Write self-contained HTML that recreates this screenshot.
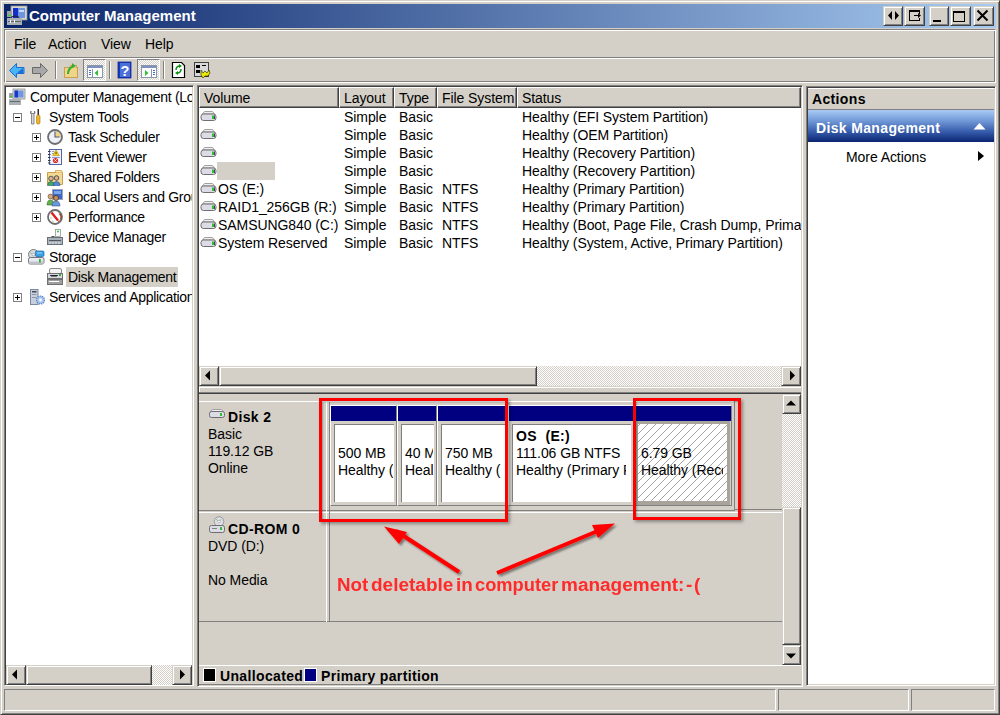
<!DOCTYPE html>
<html><head><meta charset="utf-8">
<style>
*{box-sizing:border-box;margin:0;padding:0}
html,body{width:1000px;height:715px;overflow:hidden;background:#d4d0c8}
body{position:relative;font-family:"Liberation Sans",sans-serif;font-size:14px;letter-spacing:-0.07px;color:#000}
.a{position:absolute}
.t{position:absolute;white-space:nowrap;line-height:20px}
.sunk{border:1px solid;border-color:#808080 #fff #fff #808080;box-shadow:inset 1px 1px #404040,inset -1px -1px #d4d0c8}
.rais{border:1px solid;border-color:#d4d0c8 #404040 #404040 #d4d0c8;box-shadow:inset 1px 1px #fff,inset -1px -1px #808080}
.etch{border:1px solid;border-color:#808080 #fff #fff #808080;box-shadow:inset 1px 1px #fff,inset -1px -1px #808080}
.thin{border:1px solid;border-color:#808080 #fff #fff #808080}
.chk{background-color:#fff;background-image:linear-gradient(45deg,#d4d0c8 25%,transparent 25%,transparent 75%,#d4d0c8 75%),linear-gradient(45deg,#d4d0c8 25%,transparent 25%,transparent 75%,#d4d0c8 75%);background-size:2px 2px;background-position:0 0,1px 1px}
.b{font-weight:bold;letter-spacing:0.35px}
</style></head><body>
<!-- window frame -->
<div class="a" style="left:0;top:0;width:1000px;height:715px;border:1px solid;border-color:#d4d0c8 #404040 #404040 #d4d0c8;box-shadow:inset 1px 1px #fff,inset -1px -1px #808080"></div>
<!-- title bar -->
<div class="a" style="left:4px;top:4px;width:992px;height:24px;background:linear-gradient(to right,#0a246a,#a6caf0)"></div>
<svg class="a" style="left:0;top:0" width="30" height="30" viewBox="0 0 30 30">
<rect x="11" y="6" width="16" height="14" fill="#d8d8d0" stroke="#909090" stroke-width="0.8"/>
<rect x="13" y="8" width="12" height="10" fill="#6f95e0"/>
<rect x="13" y="8" width="5" height="10" fill="#1530c8"/>
<rect x="19" y="10" width="5" height="2" fill="#c8daf8"/>
<rect x="7" y="11" width="5" height="6" fill="#9aa0a0"/>
<rect x="8" y="15" width="3" height="1" fill="#30d030"/>
<path d="M11 17.5q4-3 8 0" stroke="#202020" stroke-width="1.2" fill="none"/>
<rect x="7" y="18" width="15" height="7" fill="#a8b0b4"/>
<rect x="8" y="21" width="13" height="1" fill="#606870"/>
<rect x="10" y="20" width="1" height="3" fill="#fff"/><rect x="14" y="20" width="1" height="3" fill="#fff"/>
</svg>
<div class="t b" style="left:29px;top:6px;font-size:15px;letter-spacing:0px;color:#fff">Computer Management</div>
<!-- caption buttons -->
<div class="a rais" style="left:883px;top:6px;width:20px;height:20px;background:#d4d0c8"></div>
<div class="a rais" style="left:904px;top:6px;width:21px;height:20px;background:#d4d0c8"></div>
<div class="a rais" style="left:929px;top:6px;width:20px;height:20px;background:#d4d0c8"></div>
<div class="a rais" style="left:950px;top:6px;width:21px;height:20px;background:#d4d0c8"></div>
<div class="a rais" style="left:973px;top:6px;width:21px;height:20px;background:#d4d0c8"></div>
<svg class="a" style="left:878px;top:0" width="120" height="30" viewBox="878 0 120 30" shape-rendering="crispEdges">
<path d="M892 11v9l-4-4.5zM895 11v9l4-4.5z" fill="#000" shape-rendering="geometricPrecision"/>
<rect x="909" y="10" width="11" height="2" fill="#000"/>
<rect x="909" y="12" width="1" height="9" fill="#000"/>
<rect x="909" y="20" width="11" height="1" fill="#000"/>
<rect x="919" y="12" width="1" height="2" fill="#000"/>
<rect x="919" y="18" width="1" height="2" fill="#000"/>
<rect x="914" y="15" width="6" height="1" fill="#000"/>
<path d="M918 13l3 2.5-3 2.5z" fill="#000" shape-rendering="geometricPrecision"/>
<rect x="933" y="20" width="8" height="2" fill="#000"/>
<rect x="953" y="11" width="12" height="2" fill="#000"/>
<rect x="953" y="13" width="1" height="9" fill="#000"/>
<rect x="964" y="13" width="1" height="9" fill="#000"/>
<rect x="953" y="21" width="12" height="1" fill="#000"/>
<path d="M977.5 10.5l10 10M987.5 10.5l-10 10" stroke="#000" stroke-width="2" shape-rendering="geometricPrecision"/>
</svg>
<!-- menu/toolbar etched box -->
<div class="a etch" style="left:4px;top:29px;width:992px;height:54px"></div>
<div class="a" style="left:6px;top:57px;width:988px;height:1px;background:#808080"></div>
<div class="a" style="left:5px;top:58px;width:989px;height:1px;background:#fff"></div>
<div class="t" style="left:14px;top:34px">File</div>
<div class="t" style="left:48px;top:34px">Action</div>
<div class="t" style="left:101px;top:34px">View</div>
<div class="t" style="left:145px;top:34px">Help</div>
<div class="a" style="left:55px;top:61px;width:1px;height:18px;background:#808080"></div>
<div class="a" style="left:56px;top:61px;width:1px;height:18px;background:#fff"></div>
<div class="a" style="left:109px;top:61px;width:1px;height:18px;background:#808080"></div>
<div class="a" style="left:110px;top:61px;width:1px;height:18px;background:#fff"></div>
<div class="a" style="left:163px;top:61px;width:1px;height:18px;background:#808080"></div>
<div class="a" style="left:164px;top:61px;width:1px;height:18px;background:#fff"></div>
<div class="a chk" style="left:83px;top:59px;width:23px;height:22px;border:1px solid;border-color:#808080 #fff #fff #808080"></div>
<div class="a chk" style="left:137px;top:59px;width:23px;height:22px;border:1px solid;border-color:#808080 #fff #fff #808080"></div>
<svg class="a" style="left:0;top:56px" width="220" height="28" viewBox="0 56 220 28">
<path d="M9.5 70.5l7-7v4h7.5v6h-7.5v4z" fill="#48b4f4" stroke="#1a6fd0" stroke-width="1"/>
<path d="M18 72l5-4v5h-5z" fill="#1a70d8"/>
<path d="M47.5 70.5l-7-7v4h-8v6h8v4z" fill="#a8a8a8" stroke="#686868" stroke-width="1"/>
<rect x="64.5" y="67.5" width="13" height="10" fill="#f0d48a" stroke="#c8a050"/>
<path d="M64.5 67.5h5l1-2h6v2" fill="#f8e0a0" stroke="#c8a050"/>
<path d="M68 74q0-6 6-8" stroke="#30b030" stroke-width="2" fill="none"/>
<path d="M72 63l4 3-4 2z" fill="#30b030"/>
<!-- pressed btn1 icon -->
<rect x="87.5" y="65.5" width="15" height="12" fill="#fff" stroke="#8898a8"/>
<rect x="88" y="66" width="14" height="2" fill="#8090c0"/>
<rect x="92" y="69" width="1" height="8" fill="#8898a8"/>
<rect x="89" y="70" width="2" height="1" fill="#4070d0"/><rect x="89" y="72" width="2" height="1" fill="#4070d0"/><rect x="89" y="74" width="2" height="1" fill="#4070d0"/>
<path d="M98 70v6l-3.5-3z" fill="#30c030"/>
<!-- help -->
<rect x="118" y="62" width="13" height="16" fill="#1838c0"/>
<rect x="120" y="63" width="10" height="14" fill="#4a70d8"/><rect x="118" y="62" width="13" height="16" fill="none" stroke="#102890" stroke-width=".8"/>
<text x="125" y="76" font-family="Liberation Sans" font-weight="bold" font-size="14.5" fill="#fff" text-anchor="middle" style="letter-spacing:0">?</text>
<!-- pressed btn2 icon -->
<rect x="141.5" y="65.5" width="15" height="12" fill="#fff" stroke="#8898a8"/>
<rect x="142" y="66" width="14" height="2" fill="#8090c0"/>
<rect x="151" y="69" width="1" height="8" fill="#8898a8"/>
<rect x="153" y="70" width="2" height="1" fill="#4070d0"/><rect x="153" y="72" width="2" height="1" fill="#4070d0"/><rect x="153" y="74" width="2" height="1" fill="#4070d0"/>
<path d="M145 70v6l3.5-3z" fill="#30c030"/>
<!-- refresh doc -->
<path d="M172.5 62.5h9l3 3v12h-12z" fill="#fff" stroke="#000" stroke-width="1.2"/>
<path d="M176 70q0-4 4-4M181 69q0 4-4 4" stroke="#109010" stroke-width="1.5" fill="none"/>
<path d="M179 64l3 2-3 2zM178 71l-3 2 3 2z" fill="#109010"/>
<!-- properties -->
<rect x="194.5" y="62.5" width="14" height="14" fill="#d8d8d8" stroke="#404040"/>
<rect x="196" y="65" width="4" height="3" fill="#000"/><rect x="196" y="70" width="4" height="3" fill="#000"/>
<rect x="202" y="65" width="4" height="1" fill="#000"/>
<path d="M201 70l2 3 2-2 2 2 2-3 1 3-2 3-3 0-2 2-2-3z" fill="#e8e800" stroke="#202000" stroke-width="0.6"/>
</svg>

<!-- tree pane -->
<div class="a sunk" style="left:4px;top:85px;width:190px;height:601px;background:#fff"></div>
<div class="a" style="left:6px;top:87px;width:186px;height:597px;overflow:hidden;letter-spacing:-0.3px">
<div class="a" style="left:60px;top:180px;width:112px;height:20px;background:#d4d0c8"></div>
<div class="t" style="left:24px;top:0px">Computer Management (Local)</div>
<div class="a" style="left:7px;top:26px;width:9px;height:9px;border:1px solid #808080;background:#fff"></div>
<div class="a" style="left:9px;top:30px;width:5px;height:1px;background:#000"></div>
<div class="t" style="left:43px;top:20px">System Tools</div>
<div class="a" style="left:26px;top:46px;width:9px;height:9px;border:1px solid #808080;background:#fff"></div>
<div class="a" style="left:28px;top:50px;width:5px;height:1px;background:#000"></div>
<div class="a" style="left:30px;top:48px;width:1px;height:5px;background:#000"></div>
<div class="t" style="left:62px;top:40px">Task Scheduler</div>
<div class="a" style="left:26px;top:66px;width:9px;height:9px;border:1px solid #808080;background:#fff"></div>
<div class="a" style="left:28px;top:70px;width:5px;height:1px;background:#000"></div>
<div class="a" style="left:30px;top:68px;width:1px;height:5px;background:#000"></div>
<div class="t" style="left:62px;top:60px">Event Viewer</div>
<div class="a" style="left:26px;top:86px;width:9px;height:9px;border:1px solid #808080;background:#fff"></div>
<div class="a" style="left:28px;top:90px;width:5px;height:1px;background:#000"></div>
<div class="a" style="left:30px;top:88px;width:1px;height:5px;background:#000"></div>
<div class="t" style="left:62px;top:80px">Shared Folders</div>
<div class="a" style="left:26px;top:106px;width:9px;height:9px;border:1px solid #808080;background:#fff"></div>
<div class="a" style="left:28px;top:110px;width:5px;height:1px;background:#000"></div>
<div class="a" style="left:30px;top:108px;width:1px;height:5px;background:#000"></div>
<div class="t" style="left:62px;top:100px">Local Users and Groups</div>
<div class="a" style="left:26px;top:126px;width:9px;height:9px;border:1px solid #808080;background:#fff"></div>
<div class="a" style="left:28px;top:130px;width:5px;height:1px;background:#000"></div>
<div class="a" style="left:30px;top:128px;width:1px;height:5px;background:#000"></div>
<div class="t" style="left:62px;top:120px">Performance</div>
<div class="t" style="left:62px;top:140px">Device Manager</div>
<div class="a" style="left:7px;top:166px;width:9px;height:9px;border:1px solid #808080;background:#fff"></div>
<div class="a" style="left:9px;top:170px;width:5px;height:1px;background:#000"></div>
<div class="t" style="left:43px;top:160px">Storage</div>
<div class="t" style="left:62px;top:180px">Disk Management</div>
<div class="a" style="left:7px;top:206px;width:9px;height:9px;border:1px solid #808080;background:#fff"></div>
<div class="a" style="left:9px;top:210px;width:5px;height:1px;background:#000"></div>
<div class="a" style="left:11px;top:208px;width:1px;height:5px;background:#000"></div>
<div class="t" style="left:43px;top:200px">Services and Applications</div>
<svg class="a" style="left:0;top:0" width="186" height="240" viewBox="6 87 186 240">
<!-- root computer -->
<rect x="13" y="89" width="12" height="10" fill="#d8d8d0" stroke="#909090" stroke-width="0.8"/>
<rect x="14.5" y="90.5" width="9" height="7" fill="#7098e0"/><rect x="14.5" y="90.5" width="3.5" height="7" fill="#1a38c8"/>
<rect x="9" y="93" width="4" height="5" fill="#9aa0a0"/><rect x="10" y="96" width="2" height="1" fill="#30d030"/>
<rect x="9" y="99" width="12" height="6" fill="#a8b0b4"/><rect x="10" y="101" width="10" height="1" fill="#606870"/>
<!-- system tools -->
<path d="M31 111q-1.5 2 0.5 3.5v9.5h2.5v-9.5q2-1.5 .5-3.5v2.5h-3.5z" fill="#d8d8d8" stroke="#707070" stroke-width="0.8"/>
<rect x="37.5" y="109" width="1.5" height="6" fill="#303030"/>
<rect x="36.5" y="115" width="3.5" height="9" rx="1.5" fill="#f0b820" stroke="#a07010" stroke-width="0.6"/>
<!-- clock -->
<circle cx="55" cy="137" r="7" fill="#eef2f8" stroke="#6e6e6e" stroke-width="1.8"/>
<path d="M55.5 131.5a5.5 5.5 0 0 1 5.5 5.5h-5.5z" fill="#f0c860" opacity=".75"/>
<path d="M55 131.5v5.5h4.5" stroke="#505868" stroke-width="1.1" fill="none"/>
<circle cx="55" cy="137" r="5.6" fill="none" stroke="#a8c0e0" stroke-width=".6" stroke-dasharray="1 2"/>
<!-- event viewer -->
<rect x="49.5" y="149.5" width="12" height="15" fill="#f0f2ff" stroke="#5464a0"/>
<path d="M48 151.5h2.5M48 154.5h2.5M48 157.5h2.5M48 160.5h2.5M48 163h2.5" stroke="#303848" stroke-width="1"/>
<path d="M52 157.5h8M52 151.5h2M52 153.5h2" stroke="#7088c8" stroke-width=".8"/>
<path d="M56 150l3.3 5.6h-6.6z" fill="#f8d418" stroke="#b08800" stroke-width=".6"/>
<rect x="55.6" y="152" width=".9" height="2.2" fill="#503800"/>
<circle cx="55.5" cy="160.5" r="2.6" fill="#e02828"/>
<path d="M54.3 159.3l2.4 2.4M56.7 159.3l-2.4 2.4" stroke="#fff" stroke-width=".8"/>
<!-- shared folders -->
<path d="M47.5 172.5h15v12h-15z" fill="#f4d890" stroke="#c8a050"/>
<path d="M55.5 172.5v-2h6l1 2" fill="#f8e4a8" stroke="#c8a050" stroke-width=".8"/>
<circle cx="51" cy="178.5" r="2.3" fill="#e0b088" stroke="#304848" stroke-width=".8"/>
<path d="M47.5 185.5q0-4 3.5-4t3.5 4z" fill="#40a868" stroke="#2a6040" stroke-width=".6"/>
<circle cx="56.5" cy="178" r="2.3" fill="#e0b088" stroke="#283858" stroke-width=".8"/>
<path d="M53 185.5q0-4 3.5-4t3.5 4z" fill="#5088d0" stroke="#305088" stroke-width=".6"/>
<!-- local users -->
<rect x="52.5" y="189.5" width="10" height="10" fill="#3a68c8" stroke="#a0a8b8"/>
<rect x="54" y="191" width="7" height="3" fill="#80a8e8"/>
<circle cx="50.5" cy="196.5" r="2.4" fill="#d8a878" stroke="#705030" stroke-width=".7"/>
<path d="M47 205q0-5 3.5-5t3.5 5z" fill="#60b050" stroke="#407030" stroke-width=".6"/>
<circle cx="56" cy="198" r="2.5" fill="#c89060" stroke="#503018" stroke-width=".8"/>
<path d="M52 206q0-5 4-5t4 5z" fill="#6898d8" stroke="#385890" stroke-width=".6"/>
<!-- performance -->
<circle cx="55" cy="217" r="7" fill="#fff" stroke="#6e6e6e" stroke-width="1.8"/>
<path d="M51.5 212.5l6.5 8" stroke="#e01818" stroke-width="2.2"/><path d="M59.5 213.5a6 6 0 0 1 1 6" stroke="#d02020" stroke-width="1.2" fill="none"/>
<path d="M58.5 212.2l.8 .8M60.5 215l.6 1M60.8 218l-.3 1M51 217.5v1M52.5 221l.8 .6" stroke="#30a040" stroke-width=".9"/>
<path d="M58 221.5l1.5-.8" stroke="#c02020" stroke-width="1"/>
<!-- device manager -->
<rect x="55.5" y="229.5" width="5" height="7" fill="#f8f8f8" stroke="#8a9a90" stroke-width=".8"/>
<circle cx="58" cy="231.5" r="1" fill="#30c030"/>
<path d="M50.5 237.5q2.5-2 5 0" stroke="#282828" stroke-width="1" fill="none"/>
<rect x="47.5" y="237.5" width="15" height="7" fill="#a8b0b8" stroke="#687078"/>
<path d="M49 240.5h12" stroke="#505860" stroke-width="1"/>
<path d="M50 242v2M53 242v2M56 242v2M59 242v2" stroke="#f0f4f8" stroke-width=".8"/>
<!-- storage -->
<circle cx="33.5" cy="254.5" r="5" fill="#d8d8dc" stroke="#707478" stroke-width=".9"/><circle cx="33.5" cy="254.5" r="1.3" fill="#fff" stroke="#808080" stroke-width=".5"/>
<path d="M30 252.5l2 1.5" stroke="#70c070" stroke-width=".8"/>
<rect x="35.5" y="251" width="8.5" height="5.5" rx="1.2" fill="#3aa0e8" stroke="#1a6aa8" stroke-width=".7"/><rect x="37" y="252.5" width="5" height="1" fill="#a0d8ff"/>
<rect x="28.5" y="257.5" width="15.5" height="6.5" rx="1.8" fill="#e8e8ee" stroke="#70747c"/>
<rect x="28.8" y="261.5" width="15" height="2.2" fill="#c0c4cc"/>
<rect x="39" y="259" width="1.8" height="3.5" fill="#30b030"/>
<!-- disk management -->
<rect x="49.5" y="268.5" width="12" height="5" rx="1.5" fill="#f4f4f4" stroke="#888"/>
<rect x="47.5" y="273.5" width="15" height="5" fill="#d8d8d8" stroke="#707070"/>
<rect x="51" y="275" width="6" height="1.5" fill="#202020"/><rect x="50" y="275" width="1" height="1" fill="#2040c0"/><rect x="57" y="275" width="1" height="1" fill="#2040c0"/><rect x="59" y="274" width="2" height="2" fill="#30b030"/>
<rect x="47.5" y="279.5" width="15" height="5" fill="#a0a0a0" stroke="#707070"/>
<rect x="49" y="281" width="10" height="1" fill="#fff"/>
<!-- services -->
<rect x="30.5" y="289.5" width="7.5" height="15" fill="#c8d0dc" stroke="#7888a0"/>
<rect x="32" y="291" width="4.5" height="1.5" fill="#404858"/><rect x="32" y="294" width="4.5" height="1" fill="#8898b0"/><rect x="32" y="297" width="4.5" height="1" fill="#8898b0"/>
<circle cx="40.5" cy="300" r="4" fill="#a8c4ec" stroke="#5a80c0" stroke-width="1.2" stroke-dasharray="1.3 .9"/><circle cx="40.5" cy="300" r="1.4" fill="#fff"/>
</svg>
</div>

<!-- list pane -->
<div class="a chk" style="left:6px;top:665px;width:186px;height:20px"></div>
<div class="a rais" style="left:6px;top:665px;width:20px;height:20px;background:#d4d0c8"></div>
<div class="a rais" style="left:26px;top:665px;width:126px;height:20px;background:#d4d0c8"></div>
<div class="a rais" style="left:172px;top:665px;width:20px;height:20px;background:#d4d0c8"></div>
<svg class="a" style="left:0;top:660px" width="200" height="30" viewBox="0 660 200 30"><path d="M12 674.5l5-5v10z" fill="#000"/><path d="M185 674.5l-5-5v10z" fill="#000"/></svg>

<div class="a sunk" style="left:197px;top:85px;width:606px;height:602px;background:linear-gradient(#fff 0,#fff 280px,#d4d0c8 280px)"></div>
<div class="a" style="left:199px;top:87px;width:140px;height:21px;background:#d4d0c8;border-left:1px solid #fff;border-top:1px solid #fff;border-right:1px solid #404040;border-bottom:1px solid #404040;box-shadow:inset -1px -1px #808080"></div>
<div class="a" style="left:339px;top:87px;width:55px;height:21px;background:#d4d0c8;border-left:1px solid #fff;border-top:1px solid #fff;border-right:1px solid #404040;border-bottom:1px solid #404040;box-shadow:inset -1px -1px #808080"></div>
<div class="a" style="left:394px;top:87px;width:43px;height:21px;background:#d4d0c8;border-left:1px solid #fff;border-top:1px solid #fff;border-right:1px solid #404040;border-bottom:1px solid #404040;box-shadow:inset -1px -1px #808080"></div>
<div class="a" style="left:437px;top:87px;width:80px;height:21px;background:#d4d0c8;border-left:1px solid #fff;border-top:1px solid #fff;border-right:1px solid #404040;border-bottom:1px solid #404040;box-shadow:inset -1px -1px #808080"></div>
<div class="a" style="left:517px;top:87px;width:284px;height:21px;background:#d4d0c8;border-left:1px solid #fff;border-top:1px solid #fff;border-right:1px solid #404040;border-bottom:1px solid #404040;box-shadow:inset -1px -1px #808080"></div>
<div class="a" style="left:199px;top:87px;width:602px;height:21px;overflow:hidden">
<div class="t" style="left:5px;top:1px;width:133px;overflow:hidden">Volume</div>
<div class="t" style="left:145px;top:1px;width:48px;overflow:hidden">Layout</div>
<div class="t" style="left:200px;top:1px;width:36px;overflow:hidden">Type</div>
<div class="t" style="left:243px;top:1px;width:73px;overflow:hidden">File System</div>
<div class="t" style="left:323px;top:1px;width:277px;overflow:hidden">Status</div>
</div>
<div class="a" style="left:199px;top:108px;width:602px;height:258px;overflow:hidden">
<div class="t" style="left:145px;top:0px;line-height:18px">Simple</div>
<div class="t" style="left:200px;top:0px;line-height:18px">Basic</div>
<div class="t" style="left:323px;top:0px;line-height:18px">Healthy (EFI System Partition)</div>
<svg class="a" style="left:1px;top:3px" width="18" height="11" viewBox="0 0 18 11"><path d="M4.5 0.5h8l2 2.5h-12z" fill="#f0f0f0" stroke="#a0a0a0"/><rect x="1" y="3" width="15" height="6.5" rx="2.5" fill="#dcdce6" stroke="#6e6e6e"/><rect x="12" y="4.5" width="2" height="3.5" fill="#30c030"/><rect x="14" y="4.5" width="1" height="3.5" fill="#404060"/></svg>
<div class="t" style="left:145px;top:18px;line-height:18px">Simple</div>
<div class="t" style="left:200px;top:18px;line-height:18px">Basic</div>
<div class="t" style="left:323px;top:18px;line-height:18px">Healthy (OEM Partition)</div>
<svg class="a" style="left:1px;top:21px" width="18" height="11" viewBox="0 0 18 11"><path d="M4.5 0.5h8l2 2.5h-12z" fill="#f0f0f0" stroke="#a0a0a0"/><rect x="1" y="3" width="15" height="6.5" rx="2.5" fill="#dcdce6" stroke="#6e6e6e"/><rect x="12" y="4.5" width="2" height="3.5" fill="#30c030"/><rect x="14" y="4.5" width="1" height="3.5" fill="#404060"/></svg>
<div class="t" style="left:145px;top:36px;line-height:18px">Simple</div>
<div class="t" style="left:200px;top:36px;line-height:18px">Basic</div>
<div class="t" style="left:323px;top:36px;line-height:18px">Healthy (Recovery Partition)</div>
<svg class="a" style="left:1px;top:39px" width="18" height="11" viewBox="0 0 18 11"><path d="M4.5 0.5h8l2 2.5h-12z" fill="#f0f0f0" stroke="#a0a0a0"/><rect x="1" y="3" width="15" height="6.5" rx="2.5" fill="#dcdce6" stroke="#6e6e6e"/><rect x="12" y="4.5" width="2" height="3.5" fill="#30c030"/><rect x="14" y="4.5" width="1" height="3.5" fill="#404060"/></svg>
<div class="t" style="left:145px;top:54px;line-height:18px">Simple</div>
<div class="t" style="left:200px;top:54px;line-height:18px">Basic</div>
<div class="t" style="left:323px;top:54px;line-height:18px">Healthy (Recovery Partition)</div>
<svg class="a" style="left:1px;top:57px" width="18" height="11" viewBox="0 0 18 11"><path d="M4.5 0.5h8l2 2.5h-12z" fill="#f0f0f0" stroke="#a0a0a0"/><rect x="1" y="3" width="15" height="6.5" rx="2.5" fill="#dcdce6" stroke="#6e6e6e"/><rect x="12" y="4.5" width="2" height="3.5" fill="#30c030"/><rect x="14" y="4.5" width="1" height="3.5" fill="#404060"/></svg>
<div class="t" style="left:19px;top:72px;line-height:18px">OS (E:)</div>
<div class="t" style="left:145px;top:72px;line-height:18px">Simple</div>
<div class="t" style="left:200px;top:72px;line-height:18px">Basic</div>
<div class="t" style="left:243px;top:72px;line-height:18px">NTFS</div>
<div class="t" style="left:323px;top:72px;line-height:18px">Healthy (Primary Partition)</div>
<svg class="a" style="left:1px;top:75px" width="18" height="11" viewBox="0 0 18 11"><path d="M4.5 0.5h8l2 2.5h-12z" fill="#f0f0f0" stroke="#a0a0a0"/><rect x="1" y="3" width="15" height="6.5" rx="2.5" fill="#dcdce6" stroke="#6e6e6e"/><rect x="12" y="4.5" width="2" height="3.5" fill="#30c030"/><rect x="14" y="4.5" width="1" height="3.5" fill="#404060"/></svg>
<div class="t" style="left:19px;top:90px;line-height:18px">RAID1_256GB (R:)</div>
<div class="t" style="left:145px;top:90px;line-height:18px">Simple</div>
<div class="t" style="left:200px;top:90px;line-height:18px">Basic</div>
<div class="t" style="left:243px;top:90px;line-height:18px">NTFS</div>
<div class="t" style="left:323px;top:90px;line-height:18px">Healthy (Primary Partition)</div>
<svg class="a" style="left:1px;top:93px" width="18" height="11" viewBox="0 0 18 11"><path d="M4.5 0.5h8l2 2.5h-12z" fill="#f0f0f0" stroke="#a0a0a0"/><rect x="1" y="3" width="15" height="6.5" rx="2.5" fill="#dcdce6" stroke="#6e6e6e"/><rect x="12" y="4.5" width="2" height="3.5" fill="#30c030"/><rect x="14" y="4.5" width="1" height="3.5" fill="#404060"/></svg>
<div class="t" style="left:19px;top:108px;line-height:18px">SAMSUNG840 (C:)</div>
<div class="t" style="left:145px;top:108px;line-height:18px">Simple</div>
<div class="t" style="left:200px;top:108px;line-height:18px">Basic</div>
<div class="t" style="left:243px;top:108px;line-height:18px">NTFS</div>
<div class="t" style="left:323px;top:108px;line-height:18px">Healthy (Boot, Page File, Crash Dump, Primary Partition)</div>
<svg class="a" style="left:1px;top:111px" width="18" height="11" viewBox="0 0 18 11"><path d="M4.5 0.5h8l2 2.5h-12z" fill="#f0f0f0" stroke="#a0a0a0"/><rect x="1" y="3" width="15" height="6.5" rx="2.5" fill="#dcdce6" stroke="#6e6e6e"/><rect x="12" y="4.5" width="2" height="3.5" fill="#30c030"/><rect x="14" y="4.5" width="1" height="3.5" fill="#404060"/></svg>
<div class="t" style="left:19px;top:126px;line-height:18px">System Reserved</div>
<div class="t" style="left:145px;top:126px;line-height:18px">Simple</div>
<div class="t" style="left:200px;top:126px;line-height:18px">Basic</div>
<div class="t" style="left:243px;top:126px;line-height:18px">NTFS</div>
<div class="t" style="left:323px;top:126px;line-height:18px">Healthy (System, Active, Primary Partition)</div>
<svg class="a" style="left:1px;top:129px" width="18" height="11" viewBox="0 0 18 11"><path d="M4.5 0.5h8l2 2.5h-12z" fill="#f0f0f0" stroke="#a0a0a0"/><rect x="1" y="3" width="15" height="6.5" rx="2.5" fill="#dcdce6" stroke="#6e6e6e"/><rect x="12" y="4.5" width="2" height="3.5" fill="#30c030"/><rect x="14" y="4.5" width="1" height="3.5" fill="#404060"/></svg>
<div class="a" style="left:18px;top:54px;width:58px;height:18px;background:#d4d0c8"></div>
</div>
<div class="a chk" style="left:199px;top:366px;width:602px;height:20px"></div>
<div class="a rais" style="left:199px;top:366px;width:20px;height:20px;background:#d4d0c8"></div>
<div class="a rais" style="left:219px;top:366px;width:318px;height:20px;background:#d4d0c8"></div>
<div class="a rais" style="left:781px;top:366px;width:20px;height:20px;background:#d4d0c8"></div>
<svg class="a" style="left:199px;top:366px" width="602" height="20" viewBox="199 366 602 20"><path d="M205 375.5l5-5v10z" fill="#000"/><path d="M795 375.5l-5-5v10z" fill="#000"/></svg>

<!-- graphical pane -->
<div class="a" style="left:199px;top:387px;width:602px;height:1px;background:#fff"></div><div class="a" style="left:199px;top:387px;width:1px;height:5px;background:#fff"></div><div class="a" style="left:199px;top:392px;width:602px;height:1px;background:#808080"></div><div class="a" style="left:199px;top:393px;width:602px;height:1px;background:#404040"></div>
<div class="a" style="left:199px;top:401px;width:536px;height:1px;background:#fff"></div>
<div class="a" style="left:199px;top:510px;width:536px;height:1px;background:#808080"></div>
<div class="a" style="left:734px;top:509px;width:48px;height:1px;background:#808080"></div>
<div class="a" style="left:199px;top:512px;width:583px;height:1px;background:#fff"></div>
<div class="a" style="left:199px;top:621px;width:583px;height:1px;background:#808080"></div>
<div class="a" style="left:326px;top:401px;width:1px;height:221px;background:#fff"></div>
<div class="a" style="left:329px;top:402px;width:1px;height:220px;background:#808080"></div>
<div class="a" style="left:734px;top:401px;width:1px;height:109px;background:#808080"></div>
<div class="a" style="left:330px;top:405px;width:67px;height:101px;border-left:1px solid #fff;border-top:1px solid #fff;border-right:1px solid #808080;border-bottom:1px solid #808080"></div>
<div class="a" style="left:331px;top:406px;width:65px;height:15px;background:#000080"></div>
<div class="a" style="left:334px;top:424px;width:60px;height:78px;background:#fff;border-left:1px solid #808080;border-top:1px solid #808080"></div>
<div class="a" style="left:397px;top:405px;width:40px;height:101px;border-left:1px solid #fff;border-top:1px solid #fff;border-right:1px solid #808080;border-bottom:1px solid #808080"></div>
<div class="a" style="left:398px;top:406px;width:38px;height:15px;background:#000080"></div>
<div class="a" style="left:401px;top:424px;width:33px;height:78px;background:#fff;border-left:1px solid #808080;border-top:1px solid #808080"></div>
<div class="a" style="left:437px;top:405px;width:71px;height:101px;border-left:1px solid #fff;border-top:1px solid #fff;border-right:1px solid #808080;border-bottom:1px solid #808080"></div>
<div class="a" style="left:438px;top:406px;width:69px;height:15px;background:#000080"></div>
<div class="a" style="left:441px;top:424px;width:64px;height:78px;background:#fff;border-left:1px solid #808080;border-top:1px solid #808080"></div>
<div class="a" style="left:508px;top:405px;width:126px;height:101px;border-left:1px solid #fff;border-top:1px solid #fff;border-right:1px solid #808080;border-bottom:1px solid #808080"></div>
<div class="a" style="left:509px;top:406px;width:124px;height:15px;background:#000080"></div>
<div class="a" style="left:512px;top:424px;width:119px;height:78px;background:#fff;border-left:1px solid #808080;border-top:1px solid #808080"></div>
<div class="a" style="left:634px;top:405px;width:98px;height:101px;border-left:1px solid #fff;border-top:1px solid #fff;border-right:1px solid #808080;border-bottom:1px solid #808080"></div>
<div class="a" style="left:635px;top:406px;width:96px;height:15px;background:#000080"></div>
<div class="a" style="left:636px;top:421px;width:94px;height:84px;background:#a8a49c"></div>
<svg class="a" style="left:638px;top:424px" width="89" height="77" shape-rendering="crispEdges"><defs><pattern id="hp" width="8" height="8" patternUnits="userSpaceOnUse" x="2" y="0"><g fill="#a4a4a4"><rect x="7" y="0" width="1" height="1"/><rect x="6" y="1" width="1" height="1"/><rect x="5" y="2" width="1" height="1"/><rect x="4" y="3" width="1" height="1"/><rect x="3" y="4" width="1" height="1"/><rect x="2" y="5" width="1" height="1"/><rect x="1" y="6" width="1" height="1"/><rect x="0" y="7" width="1" height="1"/></g></pattern></defs><rect width="89" height="77" fill="#fff"/><rect width="89" height="77" fill="url(#hp)"/></svg>
<div class="t" style="left:338px;top:445px;line-height:17px;width:55px;overflow:hidden">500 MB</div>
<div class="t" style="left:338px;top:462px;line-height:17px;width:55px;overflow:hidden">Healthy (EFI System Partition)</div>
<div class="t" style="left:405px;top:445px;line-height:17px;width:28px;overflow:hidden">40 MB</div>
<div class="t" style="left:405px;top:462px;line-height:17px;width:28px;overflow:hidden">Healthy (OEM Partition)</div>
<div class="t" style="left:445px;top:445px;line-height:17px;width:59px;overflow:hidden">750 MB</div>
<div class="t" style="left:445px;top:462px;line-height:17px;width:56px;overflow:hidden">Healthy (Recovery Partition)</div>
<div class="t" style="left:516px;top:428px;line-height:17px;font-weight:bold;letter-spacing:0.35px;width:114px;overflow:hidden">OS&nbsp; (E:)</div>
<div class="t" style="left:516px;top:445px;line-height:17px;width:114px;overflow:hidden">111.06 GB NTFS</div>
<div class="t" style="left:516px;top:462px;line-height:17px;width:110px;overflow:hidden">Healthy (Primary Partition)</div>
<div class="t" style="left:641px;top:445px;line-height:17px;width:85px;overflow:hidden">6.79 GB</div>
<div class="t" style="left:641px;top:462px;line-height:17px;width:82px;overflow:hidden">Healthy (Recovery Partition)</div>
<div class="t" style="left:228px;top:409px;line-height:17px;font-weight:bold;letter-spacing:0.35px">Disk 2</div>
<div class="t" style="left:208px;top:426px;line-height:17px">Basic</div>
<div class="t" style="left:208px;top:443px;line-height:17px">119.12 GB</div>
<div class="t" style="left:208px;top:460px;line-height:17px">Online</div>
<div class="t" style="left:228px;top:521px;line-height:17px;font-weight:bold;letter-spacing:0.35px">CD-ROM 0</div>
<div class="t" style="left:208px;top:538px;line-height:17px">DVD (D:)</div>
<div class="t" style="left:208px;top:572px;line-height:17px">No Media</div>
<svg class="a" style="left:200px;top:400px" width="40" height="140" viewBox="200 400 40 140">
<path d="M212.5 409.5h9l2 2h-13z" fill="#f0f0f0" stroke="#a0a0a0"/><rect x="209.5" y="411.5" width="15" height="6" rx="2" fill="#dcdce6" stroke="#6e6e6e"/><rect x="220" y="413" width="2" height="3" fill="#30c030"/>
<circle cx="219" cy="521.5" r="4.8" fill="#dcdce4" stroke="#8a8a90" stroke-width=".8"/><path d="M216 519l2 2M221 519.5l-1.5 1.5" stroke="#70c070" stroke-width=".8"/><circle cx="219" cy="521.5" r="1.2" fill="#fff" stroke="#909090" stroke-width=".5"/>
<rect x="209.5" y="525.5" width="15" height="7" rx="2" fill="#dcdce6" stroke="#6e6e6e"/><rect x="220" y="527" width="2" height="3" fill="#30c030"/><rect x="212" y="528" width="5" height="1" fill="#808080"/>
</svg>
<div class="a chk" style="left:782px;top:394px;width:19px;height:271px"></div>
<div class="a rais" style="left:782px;top:394px;width:19px;height:20px;background:#d4d0c8"></div>
<div class="a rais" style="left:782px;top:507px;width:19px;height:138px;background:#d4d0c8"></div>
<div class="a rais" style="left:782px;top:645px;width:19px;height:20px;background:#d4d0c8"></div>
<svg class="a" style="left:782px;top:394px" width="19" height="271" viewBox="782 394 19 271"><path d="M791 400.5l5 5h-10z" fill="#000"/><path d="M791 658.5l5-5h-10z" fill="#000"/></svg>
<div class="a" style="left:199px;top:665px;width:602px;height:1px;background:#fff"></div>
<div class="a" style="left:199px;top:684px;width:602px;height:1px;background:#808080"></div>
<div class="a" style="left:203px;top:668px;width:13px;height:14px;background:#000;border:1px solid #fff"></div>
<div class="a" style="left:304px;top:668px;width:13px;height:14px;background:#000080;border:1px solid #fff"></div>
<div class="t" style="left:220px;top:668px;line-height:17px;font-weight:bold;letter-spacing:0.35px">Unallocated</div>
<div class="t" style="left:321px;top:668px;line-height:17px;font-weight:bold;letter-spacing:0.35px">Primary partition</div>
<div class="a" style="left:319px;top:398px;width:189px;height:124px;border:3px solid #ff0000;box-shadow:2px 2px 3px rgba(0,0,0,.35),inset 1px 1px 2px rgba(0,0,0,.3)"></div>
<div class="a" style="left:633px;top:398px;width:108px;height:122px;border:3px solid #ff0000;box-shadow:2px 2px 3px rgba(0,0,0,.35),inset 1px 1px 2px rgba(0,0,0,.3)"></div>
<svg class="a" style="left:300px;top:510px" width="340" height="80" viewBox="300 510 340 80">
<defs><filter id="sh" x="-20%" y="-20%" width="140%" height="140%"><feGaussianBlur in="SourceAlpha" stdDeviation="1.2"/><feOffset dx="2" dy="2"/><feComponentTransfer><feFuncA type="linear" slope=".45"/></feComponentTransfer><feMerge><feMergeNode/><feMergeNode in="SourceGraphic"/></feMerge></filter></defs>
<g filter="url(#sh)">
<path d="M459 572L396 531" stroke="#ff0000" stroke-width="4"/>
<path d="M384 526.5L407 532L399 544z" fill="#ff0000"/>
<path d="M497 573L600 530" stroke="#ff0000" stroke-width="4"/>
<path d="M615 523.5L592 525L598 538z" fill="#ff0000"/>
</g></svg>

<div class="t" style="left:336.9px;top:575px;font-size:17.5px;line-height:20px;font-weight:bold;color:#ff2a2a;letter-spacing:0px;transform:scaleX(1.074);transform-origin:0 0">Not</div>
<div class="t" style="left:370.5px;top:575px;font-size:17.5px;line-height:20px;font-weight:bold;color:#ff2a2a;letter-spacing:0px;transform:scaleX(1.086);transform-origin:0 0">deletable</div>
<div class="t" style="left:455.9px;top:575px;font-size:17.5px;line-height:20px;font-weight:bold;color:#ff2a2a;letter-spacing:0px;transform:scaleX(1.077);transform-origin:0 0">in</div>
<div class="t" style="left:474.5px;top:575px;font-size:17.5px;line-height:20px;font-weight:bold;color:#ff2a2a;letter-spacing:0px;transform:scaleX(1.045);transform-origin:0 0">computer</div>
<div class="t" style="left:560.9px;top:575px;font-size:17.5px;line-height:20px;font-weight:bold;color:#ff2a2a;letter-spacing:0px;transform:scaleX(1.085);transform-origin:0 0">management</div>
<div class="t" style="left:677.5px;top:575px;font-size:17.5px;line-height:20px;font-weight:bold;color:#ff2a2a;letter-spacing:1.6px;transform:scaleX(1.08);transform-origin:0 0">:-(</div>
<!-- actions pane -->
<div class="a sunk" style="left:806px;top:86px;width:190px;height:600px;background:#fff"></div>
<div class="a" style="left:808px;top:88px;width:186px;height:22px;background:#d4d0c8;border-top:1px solid #fff;border-bottom:1px solid #808080"></div>
<div class="a" style="left:808px;top:110px;width:186px;height:32px;background:linear-gradient(to bottom,#a9cbf5 0%,#6f97d6 35%,#3358a8 70%,#0a2470 100%)"></div>
<div class="t b" style="left:812px;top:89px">Actions</div>
<div class="t b" style="left:816px;top:118px;color:#fff">Disk Management</div>
<div class="t" style="left:846px;top:147px">More Actions</div>
<svg class="a" style="left:960px;top:110px" width="40" height="60" viewBox="960 110 40 60">
<path d="M979.5 123l6 6.5h-12z" fill="#fff"/>
<path d="M978 151v10l6-5z" fill="#000"/>
</svg>

<!-- status bar -->
<div class="a thin" style="left:4px;top:689px;width:772px;height:22px"></div>
<div class="a thin" style="left:778px;top:689px;width:131px;height:22px"></div>
<div class="a thin" style="left:911px;top:689px;width:84px;height:22px"></div>
</body></html>
